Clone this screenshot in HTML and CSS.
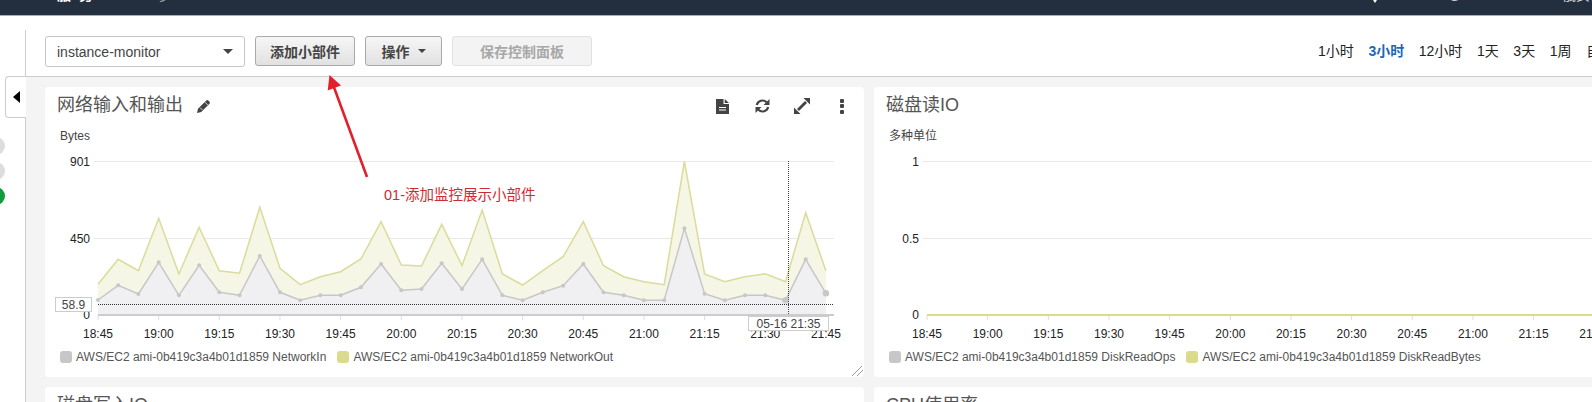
FILE: index.html
```html
<!DOCTYPE html>
<html lang="zh-CN">
<head>
  <meta charset="UTF-8">
  <title>CloudWatch 控制面板</title>
  <link rel="stylesheet" href="styles.css">
</head>
<body>

  <nav class="topnav">
    <span class="nav-item nav-services">服务</span>
    <span class="nav-item nav-groups">资源组</span>
    <svg class="nav-bell" width="16" height="16" viewBox="0 0 16 16"><path d="M8 0c3 0 4 2 4 5v4l2 3H2l2-3V5c0-3 1-5 4-5zM6 13h4l-2 3z" fill="#fff"/></svg>
    <span class="nav-item nav-user">simon @ 5180035688</span>
    <span class="nav-item nav-region">俄亥俄州</span>
  </nav>

  <div class="page">
    <aside class="sidebar">
      <div class="side-tab"><span class="side-arrow"></span></div>
      <span class="side-dot"></span>
      <span class="side-dot"></span>
      <span class="side-dot side-dot-ok"></span>
    </aside>

    <main class="main">
      <div class="toolbar">
        <div class="dash-select">instance-monitor<span class="caret"></span></div>
        <button class="btn btn-add">添加小部件</button>
        <button class="btn btn-actions">操作<span class="caret caret-small"></span></button>
        <button class="btn btn-save" disabled>保存控制面板</button>
        <div class="time-range">
          <a>1小时</a>
          <a class="active">3小时</a>
          <a>12小时</a>
          <a>1天</a>
          <a>3天</a>
          <a>1周</a>
          <a>自定义</a>
        </div>
      </div>

      <div class="dash">
        <section class="panel">
          <header class="panel-head">
            <h2 class="panel-title">网络输入和输出</h2>
            <svg class="edit-icon" width="14" height="14" viewBox="0 0 14 14"><path d="M0 14l1-4.2 8.3-8.3a1.4 1.4 0 0 1 2 0l1.2 1.2a1.4 1.4 0 0 1 0 2L4.200 13z" fill="#444"/><path d="M8 3.200l2.800 2.800M3 8.600l2.400 2.400" stroke="#fff" stroke-width=".8"/></svg>
            <div class="panel-tools">
              <span class="tool"><svg width="13" height="15" viewBox="0 0 13 15"><path d="M0 0h7.500v5H13v10H0z" fill="#444"/><path d="M8.700 0L13 4H8.700z" fill="#444"/><path d="M3 8.500h7M3 11h7" stroke="#fff" stroke-width="1.200"/></svg></span>
              <span class="tool"><svg width="15" height="14" viewBox="0 0 15 14"><path d="M1.800 6a5.800 5.800 0 0 1 9.800-2.700" fill="none" stroke="#444" stroke-width="2.200"/><path d="M13.200 8a5.800 5.800 0 0 1-9.800 2.700" fill="none" stroke="#444" stroke-width="2.200"/><path d="M14.500 0v6h-6zM.5 14V8h6z" fill="#444"/></svg></span>
              <span class="tool"><svg width="16" height="16" viewBox="0 0 16 16"><path d="M4 12l8-8" stroke="#444" stroke-width="2.800"/><path d="M9.500 0H16v6.500zM6.500 16H0V9.500z" fill="#444"/></svg></span>
              <span class="tool"><span class="tool-dots"><i></i><i></i><i></i></span></span>
            </div>
          </header>
          <svg class="chart" id="netChart" width="819" height="224"></svg>
          <div class="legend">
            <span class="legend-item"><i class="swatch swatch-grey"></i>AWS/EC2 ami-0b419c3a4b01d1859 NetworkIn</span>
            <span class="legend-item"><i class="swatch swatch-olive"></i>AWS/EC2 ami-0b419c3a4b01d1859 NetworkOut</span>
          </div>
          <svg class="resize-grip" width="11" height="10" viewBox="0 0 11 10"><path d="M0 10L10 0M5 10l6-6" stroke="#999"/></svg>
        </section>

        <section class="panel">
          <header class="panel-head">
            <h2 class="panel-title">磁盘读IO</h2>
          </header>
          <svg class="chart" id="diskChart" width="819" height="224"></svg>
          <div class="legend">
            <span class="legend-item"><i class="swatch swatch-grey"></i>AWS/EC2 ami-0b419c3a4b01d1859 DiskReadOps</span>
            <span class="legend-item"><i class="swatch swatch-olive"></i>AWS/EC2 ami-0b419c3a4b01d1859 DiskReadBytes</span>
          </div>
        </section>

        <section class="panel">
          <header class="panel-head">
            <h2 class="panel-title">磁盘写入IO</h2>
          </header>
        </section>

        <section class="panel">
          <header class="panel-head">
            <h2 class="panel-title">CPU使用率</h2>
          </header>
        </section>
      </div>
    </main>
  </div>

  <!-- annotation drawn on top of the screenshot -->
  <svg class="note-arrow" width="1592" height="402">
    <path d="M367 177L333.500 86" stroke="#e2202c" stroke-width="2.600"/>
    <path d="M329.500 75L341 85.600 327.700 90.400z" fill="#e2202c"/>
  </svg>
  <div class="note-text">01-添加监控展示小部件</div>

  <script>
    const times = ["18:45","19:00","19:15","19:30","19:45","20:00","20:15","20:30","20:45","21:00","21:15","21:30","21:45"];
    const x0 = 53, step = 20.22, base = 193;

    // series values as pixel rows read off the chart
    const netOut = [253,178,212,55,222,82,212,220,22,205,254,230,215,177,65,195,198,73,197,30,222,255,212,170,65,197,230,245,254,-116,222,245,230,221,245,38,212];
    const netIn = [300,256,282,187,286,196,277,286,168,277,301,286,286,262,192,271,267,190,267,178,286,301,277,257,192,277,286,301,301,85,281,301,286,286,301,178,280];

    const px = i => (x0 + i * step).toFixed(1);
    const py = v => (78 + v / 3).toFixed(1);
    const line = arr => arr.map((v, i) => px(i) + "," + py(v)).join(" ");

    function axisParts(yLabels, right) {
      let s = "";
      yLabels.forEach(l => {
        if (l.grid) s += `<line class="grid" x1="49" x2="${right}" y1="${l.y}" y2="${l.y}"/>`;
        s += `<text class="tick-y" x="45" y="${l.y + 4}">${l.text}</text>`;
      });
      times.forEach((t, i) => {
        const x = x0 + i * step * 3;
        s += `<line class="tick" x1="${x}" x2="${x}" y1="193" y2="198"/>`;
        s += `<text class="tick-x" x="${x}" y="216">${t}</text>`;
      });
      return s;
    }

    function drawNet() {
      const end = px(netOut.length - 1);
      let s = axisParts([{ text: "901", y: 39.5, grid: true }, { text: "450", y: 116.5, grid: true }, { text: "0", y: 193 }], 789);
      s = `<text class="axis-name" x="15" y="18">Bytes</text>` + s;
      s += `<polygon class="area-out" points="${px(0)},${base} ${line(netOut)} ${end},${base}"/>`;
      s += `<polygon class="area-in" points="${px(0)},${base} ${line(netIn)} ${end},${base}"/>`;
      s += `<polyline class="line-out" points="${line(netOut)}"/>`;
      s += `<polyline class="line-in" points="${line(netIn)}"/>`;
      netIn.forEach((v, i) => {
        const r = (i === 34 || i === 36) ? 3.2 : 2;
        s += `<circle class="dot" cx="${px(i)}" cy="${py(v)}" r="${r}"/>`;
      });
      s += `<line class="axis" x1="53" x2="789" y1="193" y2="193"/>`;
      s += `<line class="threshold" x1="53" x2="789" y1="182.500" y2="182.500"/>`;
      s += `<line class="cursor" x1="743.500" x2="743.500" y1="39" y2="193"/>`;
      s += `<rect class="flag" x="10.500" y="175.500" width="36" height="14"/>`;
      s += `<text class="flag-text" x="28.500" y="187">58.9</text>`;
      s += `<rect class="flag" x="703.500" y="194.500" width="80" height="14"/>`;
      s += `<text class="flag-text" x="743.500" y="206">05-16 21:35</text>`;
      document.getElementById("netChart").innerHTML = s;
    }

    function drawDisk() {
      let s = axisParts([{ text: "1", y: 39.500, grid: true }, { text: "0.5", y: 116.500, grid: true }, { text: "0", y: 193 }], 819);
      s = `<text class="axis-name" x="15" y="18">多种单位</text>` + s;
      s += `<line class="axis axis-flat" x1="53" x2="819" y1="193" y2="193"/>`;
      document.getElementById("diskChart").innerHTML = s;
    }

    drawNet();
    drawDisk();
  </script>

</body>
</html>
```
FILE: styles.css
```css
* {
  box-sizing: border-box;
}
body {
  margin: 0;
  width: 1592px;
  height: 402px;
  overflow: hidden;
  background: #fff;
  color: #444;
  font-family: "Liberation Sans", "Noto Sans CJK SC", sans-serif;
  font-size: 14px;
}

/* top bar, only its lower edge is in frame */
.topnav {
  display: flex;
  align-items: flex-end;
  height: 16px;
  padding-bottom: 13px;
  background: #232f3e;
  border-bottom: 1px solid #aab0b6;
  overflow: visible;
}
.nav-item {
  color: #fff;
  line-height: 14px;
  white-space: nowrap;
  flex-shrink: 0;
}
.nav-services {
  margin-left: 57px;
  width: 44px;
  font-weight: bold;
  letter-spacing: 8px;
}
.nav-groups {
  margin-left: 58px;
  width: 8px;
  overflow: hidden;
  opacity: .6;
}
.nav-bell {
  margin-left: 1200px;
  margin-bottom: -1px;
  flex-shrink: 0;
}
.nav-user {
  margin-left: 27px;
  width: 108px;
  overflow: hidden;
  font-size: 13px;
  opacity: .8;
}
.nav-region {
  margin-left: 44px;
  opacity: .8;
}

.page {
  display: flex;
  height: 386px;
}

.sidebar {
  flex: 0 0 26px;
  display: flex;
  flex-direction: column;
  align-items: flex-end;
  margin-top: 14px;
  border-right: 1px solid #ccc;
}
.side-tab {
  display: flex;
  align-items: center;
  justify-content: center;
  width: 21px;
  height: 42px;
  margin-top: 46px;
  margin-right: -1px;
  background: #fff;
  border: 1px solid #ccc;
  border-right: none;
  border-radius: 4px 0 0 4px;
  position: relative;
}
.side-arrow {
  border-top: 6px solid transparent;
  border-bottom: 6px solid transparent;
  border-right: 7px solid #000;
}
.side-dot {
  align-self: flex-start;
  width: 18px;
  height: 18px;
  margin-left: -13px;
  margin-top: 7px;
  border-radius: 50%;
  background: #ddd;
}
.side-tab + .side-dot {
  margin-top: 19px;
}
.side-dot-ok {
  background: #109b3c;
}

.main {
  flex: 1;
  min-width: 0;
  overflow: hidden;
}

.toolbar {
  display: flex;
  align-items: flex-start;
  height: 61px;
  padding: 20px 0 0 19px;
  background: #fff;
  border-bottom: 1px solid #ccc;
  overflow: hidden;
}
.dash-select {
  display: flex;
  align-items: center;
  justify-content: space-between;
  flex: 0 0 200px;
  height: 31px;
  padding: 0 11px;
  border: 1px solid #c6c6c6;
  border-radius: 3px;
  color: #444;
}
.caret {
  width: 0;
  height: 0;
  border-left: 5px solid transparent;
  border-right: 5px solid transparent;
  border-top: 5px solid #444;
}
.caret-small {
  margin-left: 8px;
  border-left-width: 4px;
  border-right-width: 4px;
  border-top-width: 4px;
}
.btn {
  display: flex;
  align-items: center;
  justify-content: center;
  flex-shrink: 0;
  height: 30px;
  padding: 0;
  font-family: inherit;
  font-size: 14px;
  font-weight: bold;
  color: #444;
  background: linear-gradient(#f6f6f6, #e1e1e1);
  border: 1px solid #a9a9a9;
  border-radius: 3px;
}
.btn-add {
  width: 100px;
  margin-left: 10px;
}
.btn-actions {
  width: 77px;
  margin-left: 10px;
}
.btn-save {
  width: 140px;
  margin-left: 10px;
  color: #a8a8a8;
  background: #f3f3f3;
  border-color: #e2e2e2;
}
.time-range {
  display: flex;
  flex-shrink: 0;
  gap: 14.6px;
  height: 30px;
  margin-left: 726px;
  line-height: 30px;
  color: #222;
  white-space: nowrap;
}
.time-range .active {
  color: #1f67b3;
  font-weight: bold;
}

.dash {
  display: grid;
  grid-template-columns: 819px 819px;
  grid-auto-rows: 290px;
  gap: 10px;
  height: 325px;
  padding: 10px 0 0 19px;
  background: #f4f4f4;
  overflow: hidden;
}
.panel {
  position: relative;
  background: #fff;
  border-radius: 4px;
}
.panel-head {
  display: flex;
  align-items: center;
  height: 35px;
  padding: 0 2px 0 12px;
}
.panel-title {
  margin: 0;
  font-size: 18px;
  font-weight: normal;
  line-height: 36px;
  color: #555;
}
.edit-icon {
  margin: 3px 0 0 14px;
}
.panel-tools {
  display: flex;
  margin-left: auto;
  margin-top: 3px;
}
.tool {
  display: flex;
  align-items: center;
  justify-content: center;
  width: 40px;
  height: 16px;
}
.tool-dots {
  display: flex;
  flex-direction: column;
  gap: 1.5px;
}
.tool-dots i {
  width: 4.5px;
  height: 4px;
  border-radius: 1px;
  background: #444;
}

.chart {
  display: block;
}
.chart text {
  font-family: "Liberation Sans", "Noto Sans CJK SC", sans-serif;
  font-size: 12px;
}
.axis-name {
  fill: #444;
}
.tick-y {
  fill: #222;
  text-anchor: end;
}
.tick-x {
  fill: #222;
  text-anchor: middle;
}
.grid {
  stroke: #e8e8e8;
}
.tick {
  stroke: #ddd;
}
.axis {
  stroke: #ccc;
  stroke-width: 2;
}
.axis-flat {
  stroke: #dbdb8d;
}
.area-out {
  fill: #f5f6e6;
}
.area-in {
  fill: #f0f0f2;
}
.line-out {
  fill: none;
  stroke: #dbdb9a;
  stroke-width: 1.5;
}
.line-in {
  fill: none;
  stroke: #c7c7c7;
  stroke-width: 1.5;
}
.dot {
  fill: #c7c7c7;
}
.threshold {
  stroke: #333;
  stroke-dasharray: 1 1;
}
.cursor {
  stroke: #444;
  stroke-dasharray: 1 1;
}
.flag {
  fill: #fff;
  stroke: #ccc;
}
.chart .flag-text {
  fill: #444;
  text-anchor: middle;
}

.legend {
  display: flex;
  gap: 11px;
  padding: 4px 0 0 15px;
  font-size: 12px;
  line-height: 14px;
  color: #555;
}
.legend-item {
  display: flex;
  align-items: center;
  white-space: nowrap;
}
.swatch {
  width: 12px;
  height: 12px;
  margin-right: 4px;
  border-radius: 3px;
}
.swatch-grey {
  background: #c7c7c7;
}
.swatch-olive {
  background: #dbdb8d;
}
.resize-grip {
  position: absolute;
  right: 1px;
  bottom: 1px;
}

.note-arrow {
  position: absolute;
  left: 0;
  top: 0;
  pointer-events: none;
}
.note-text {
  position: absolute;
  left: 384px;
  top: 186px;
  color: #cf2a33;
  font-size: 14.5px;
  line-height: 18px;
  white-space: nowrap;
}
```
